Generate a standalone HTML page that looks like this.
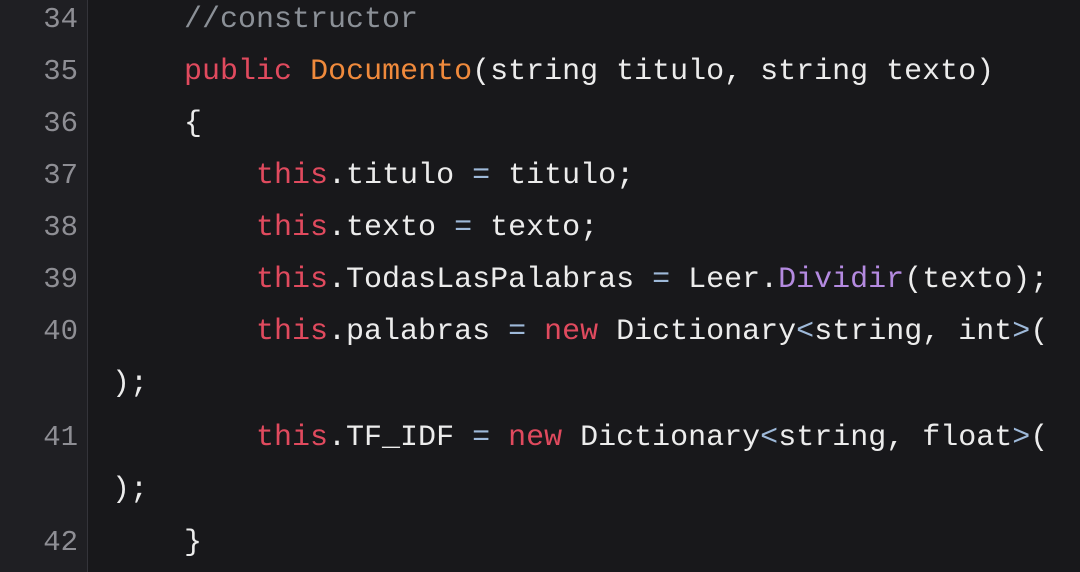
<!DOCTYPE html>
<html><head><style>
html,body{margin:0;padding:0;width:1080px;height:572px;overflow:hidden;background:#18181b;}
.g{position:absolute;left:0;top:0;width:87px;height:572px;background:#1f1f23;border-right:1px solid #34343a;}
.l{position:absolute;font-family:"Liberation Mono",monospace;font-size:30px;line-height:36px;white-space:pre;color:#ececec;margin-top:2px;}
.n{position:absolute;left:0;width:78px;text-align:right;font-family:"Liberation Mono",monospace;font-size:29px;line-height:36px;color:#8e8e94;margin-top:2px;}
.c{color:#8b9097}.k{color:#e04a5e}.o{color:#f08a3c}.p{color:#b48ae0}.b{color:#9eb9d9}
</style></head><body>
<div class="g"></div>
<div class="n" style="top:0">34</div>
<div class="n" style="top:52px">35</div>
<div class="n" style="top:104px">36</div>
<div class="n" style="top:156px">37</div>
<div class="n" style="top:208px">38</div>
<div class="n" style="top:260px">39</div>
<div class="n" style="top:312px">40</div>
<div class="n" style="top:418px">41</div>
<div class="n" style="top:523px">42</div>
<div class="l" style="left:112px;top:0"><span class="c">    //constructor</span></div>
<div class="l" style="left:112px;top:52px">    <span class="k">public</span> <span class="o">Documento</span>(string titulo, string texto)</div>
<div class="l" style="left:112px;top:104px">    {</div>
<div class="l" style="left:112px;top:156px">        <span class="k">this</span>.titulo <span class="b">=</span> titulo;</div>
<div class="l" style="left:112px;top:208px">        <span class="k">this</span>.texto <span class="b">=</span> texto;</div>
<div class="l" style="left:112px;top:260px">        <span class="k">this</span>.TodasLasPalabras <span class="b">=</span> Leer.<span class="p">Dividir</span>(texto);</div>
<div class="l" style="left:112px;top:312px">        <span class="k">this</span>.palabras <span class="b">=</span> <span class="k">new</span> Dictionary<span class="b">&lt;</span>string, int<span class="b">&gt;</span>(</div>
<div class="l" style="left:112px;top:364px">);</div>
<div class="l" style="left:112px;top:418px">        <span class="k">this</span>.TF_IDF <span class="b">=</span> <span class="k">new</span> Dictionary<span class="b">&lt;</span>string, float<span class="b">&gt;</span>(</div>
<div class="l" style="left:112px;top:470px">);</div>
<div class="l" style="left:112px;top:523px">    }</div>
</body></html>
